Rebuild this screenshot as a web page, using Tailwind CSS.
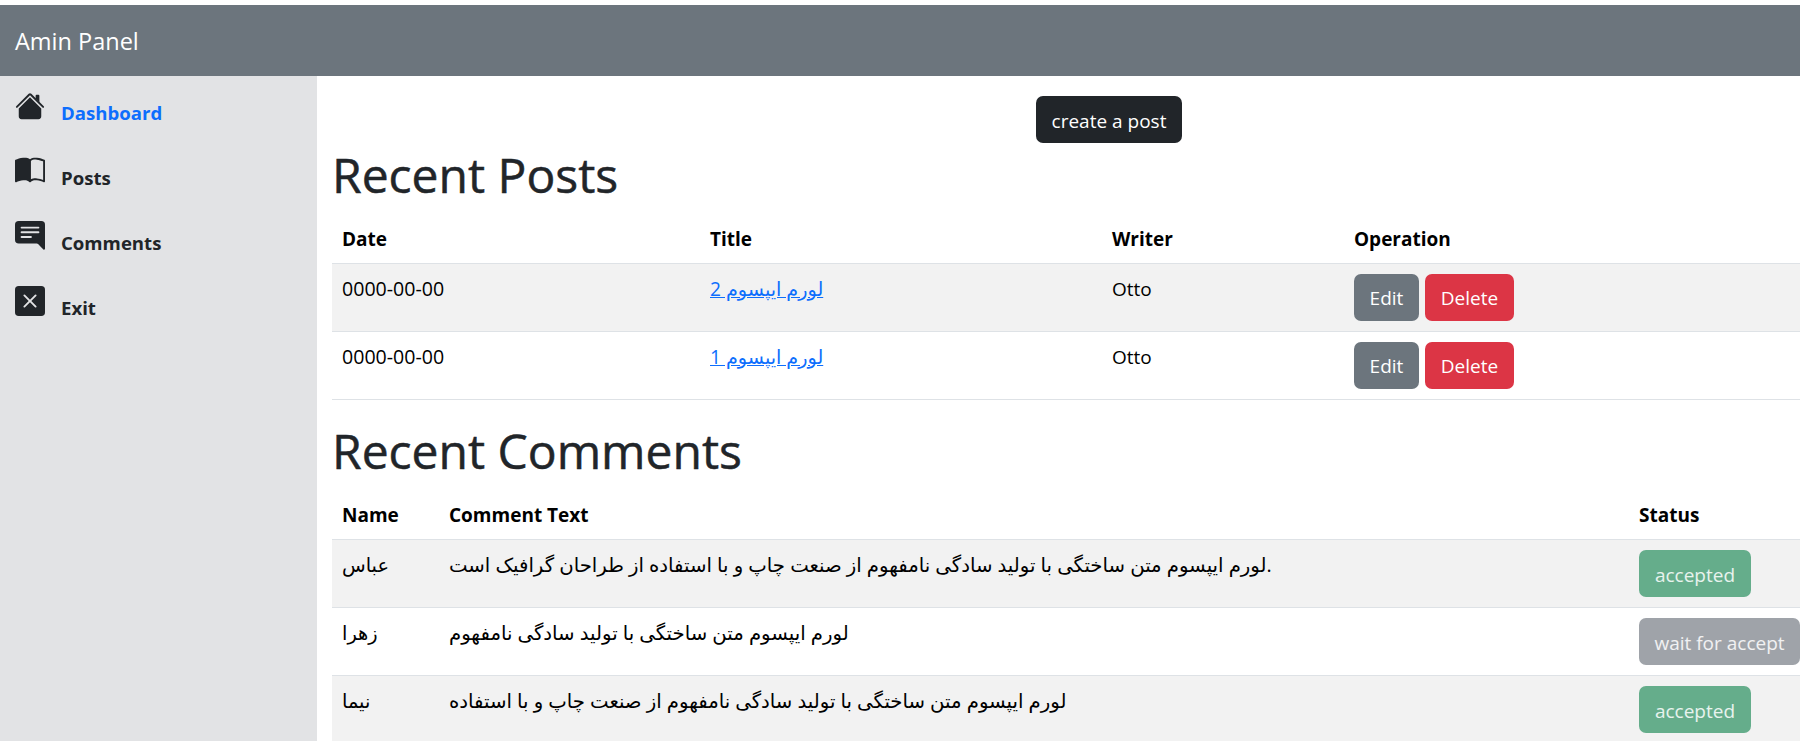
<!DOCTYPE html>
<html>
  <head>
    <title>Amin Panel</title>
    <script src="https://cdn.jsdelivr.net/npm/@tailwindcss/browser@4"></script>
  </head>
  <body class="bg-white h-screen overflow-hidden pt-[5px] text-[19px] leading-[30px] text-[#212529] font-['Open_Sans','DejaVu_Sans',sans-serif]">
    <header class="bg-[#6c757d] h-[71px] flex items-center px-[15px] text-[23.5px] text-white">Amin Panel</header>

    <div class="flex h-[665px]">
      <aside class="w-[317px] shrink-0 bg-[#e2e3e5] pt-[18px] pl-[15px] text-[18.6px]">
        <a class="flex items-start gap-[16px] h-[65px] font-bold text-[#0d6efd]" href="#">
          <svg class="mt-[-3px] text-[#212529]" width="30" height="30" viewBox="0 0 16 16" fill="currentColor">
            <path fill-rule="evenodd" d="m8 3.293 6 6V13.5a1.5 1.5 0 0 1-1.5 1.5h-9A1.5 1.5 0 0 1 2 13.5V9.293l6-6zm5-.793V6l-2-2V2.5a.5.5 0 0 1 .5-.5h1a.5.5 0 0 1 .5.5z"/>
            <path fill-rule="evenodd" d="M7.293 1.5a1 1 0 0 1 1.414 0l6.647 6.646a.5.5 0 0 1-.708.708L8 2.207 1.354 8.854a.5.5 0 1 1-.708-.708L7.293 1.5z"/>
          </svg>
          <span class="mt-[4px]">Dashboard</span>
        </a>
        <a class="flex items-start gap-[16px] h-[65px] font-bold" href="#">
          <svg class="mt-[-3px]" width="30" height="30" viewBox="0 0 16 16" fill="currentColor">
            <path fill-rule="evenodd" d="M8.5 2.687c.654-.689 1.782-.886 3.112-.752 1.234.124 2.503.523 3.388.893v9.923c-.918-.35-2.107-.692-3.287-.81-1.094-.111-2.278-.039-3.213.492V2.687zM8 1.783C7.015.936 5.587.81 4.287.94c-1.514.153-3.042.672-3.994 1.105A.5.5 0 0 0 0 2.5v11a.5.5 0 0 0 .707.455c.882-.4 2.303-.881 3.68-1.02 1.409-.142 2.59.087 3.223.877a.5.5 0 0 0 .78 0c.633-.79 1.814-1.019 3.222-.877 1.378.139 2.8.62 3.681 1.02A.5.5 0 0 0 16 13.5v-11a.5.5 0 0 0-.293-.455c-.952-.433-2.48-.952-3.994-1.105C10.413.809 8.985.936 8 1.783z"/>
          </svg>
          <span class="mt-[4px]">Posts</span>
        </a>
        <a class="flex items-start gap-[16px] h-[65px] font-bold" href="#">
          <svg class="mt-[-3px]" width="30" height="30" viewBox="0 0 16 16" fill="currentColor">
            <path d="M16 2a2 2 0 0 0-2-2H2a2 2 0 0 0-2 2v8a2 2 0 0 0 2 2h9.586a1 1 0 0 1 .707.293l2.853 2.853a.5.5 0 0 0 .854-.353V2zM3.5 3h9a.5.5 0 0 1 0 1h-9a.5.5 0 0 1 0-1zm0 2.5h9a.5.5 0 0 1 0 1h-9a.5.5 0 0 1 0-1zm0 2.5h5a.5.5 0 0 1 0 1h-5a.5.5 0 0 1 0-1z"/>
          </svg>
          <span class="mt-[4px]">Comments</span>
        </a>
        <a class="flex items-start gap-[16px] h-[65px] font-bold" href="#">
          <svg class="mt-[-3px]" width="30" height="30" viewBox="0 0 16 16" fill="currentColor">
            <path d="M2 0a2 2 0 0 0-2 2v12a2 2 0 0 0 2 2h12a2 2 0 0 0 2-2V2a2 2 0 0 0-2-2H2zm3.354 4.646L8 7.293l2.646-2.647a.5.5 0 0 1 .708.708L8.707 8l2.647 2.646a.5.5 0 0 1-.708.708L8 8.707l-2.646 2.647a.5.5 0 0 1-.708-.708L7.293 8 4.646 5.354a.5.5 0 1 1 .708-.708z"/>
          </svg>
          <span class="mt-[4px]">Exit</span>
        </a>
      </aside>

      <main class="flex-1 min-w-0 pl-[15px] pt-[20px]">
        <div class="flex justify-center pl-[86px]">
          <a class="bg-[#212529] text-white rounded-[7px] h-[47px] pt-[2px] px-[16px] flex items-center" href="#">create a post</a>
        </div>

        <h1 class="text-[48px] [-webkit-text-stroke:0.5px] leading-[60px] mt-[2px] mb-[8px]">Recent Posts</h1>
        <table class="w-[1468px] table-fixed text-black">
          <thead>
            <tr class="h-[50px] border-b border-[#dee2e6] text-left font-bold">
              <th class="w-[368px] px-[10px] pt-[2px]">Date</th>
              <th class="w-[402px] px-[10px] pt-[2px]">Title</th>
              <th class="w-[242px] px-[10px] pt-[2px]">Writer</th>
              <th class="px-[10px] pt-[2px]">Operation</th>
            </tr>
          </thead>
          <tbody>
            <tr class="h-[68px] border-b border-[#dee2e6] bg-[#f2f2f2]">
              <td class="align-top p-[10px] text-[19.6px]">0000-00-00</td>
              <td class="align-top p-[10px]"><a class="text-[#0d6efd] underline text-[19.2px]" href="#">لورم ایپسوم 2</a></td>
              <td class="align-top p-[10px]">Otto</td>
              <td class="align-top p-[10px]">
                <div class="flex gap-[6px]">
                  <a class="bg-[#6c757d] text-white rounded-[7px] h-[47px] pt-[2px] w-[65px] flex items-center justify-center" href="#">Edit</a>
                  <a class="bg-[#dc3545] text-white rounded-[7px] h-[47px] pt-[2px] w-[89px] flex items-center justify-center" href="#">Delete</a>
                </div>
              </td>
            </tr>
            <tr class="h-[68px] border-b border-[#dee2e6]">
              <td class="align-top p-[10px] text-[19.6px]">0000-00-00</td>
              <td class="align-top p-[10px]"><a class="text-[#0d6efd] underline text-[19.2px]" href="#">لورم ایپسوم 1</a></td>
              <td class="align-top p-[10px]">Otto</td>
              <td class="align-top p-[10px]">
                <div class="flex gap-[6px]">
                  <a class="bg-[#6c757d] text-white rounded-[7px] h-[47px] pt-[2px] w-[65px] flex items-center justify-center" href="#">Edit</a>
                  <a class="bg-[#dc3545] text-white rounded-[7px] h-[47px] pt-[2px] w-[89px] flex items-center justify-center" href="#">Delete</a>
                </div>
              </td>
            </tr>
          </tbody>
        </table>

        <h1 class="text-[48px] [-webkit-text-stroke:0.5px] leading-[60px] mt-[21px] mb-[9px]">Recent Comments</h1>
        <table class="w-[1468px] table-fixed text-black">
          <thead>
            <tr class="h-[50px] border-b border-[#dee2e6] text-left font-bold">
              <th class="w-[107px] px-[10px] pt-[2px]">Name</th>
              <th class="w-[1190px] px-[10px] pt-[2px]">Comment Text</th>
              <th class="px-[10px] pt-[2px]">Status</th>
            </tr>
          </thead>
          <tbody>
            <tr class="h-[68px] border-b border-[#dee2e6] bg-[#f2f2f2]">
              <td class="align-top p-[10px] text-[19.4px]">عباس</td>
              <td class="align-top p-[10px] text-[19.7px]">لورم ایپسوم متن ساختگی با تولید سادگی نامفهوم از صنعت چاپ و با استفاده از طراحان گرافیک است.</td>
              <td class="align-top p-[10px]"><span class="bg-[#65ad8b] text-white/85 rounded-[7px] h-[47px] pt-[2px] w-[112px] flex items-center justify-center">accepted</span></td>
            </tr>
            <tr class="h-[68px] border-b border-[#dee2e6]">
              <td class="align-top p-[10px] text-[19.4px]">زهرا</td>
              <td class="align-top p-[10px] text-[19.7px]">لورم ایپسوم متن ساختگی با تولید سادگی نامفهوم</td>
              <td class="align-top p-[10px]"><span class="bg-[#9fa3a9] text-white/85 rounded-[7px] h-[47px] pt-[2px] w-[161px] flex items-center justify-center">wait for accept</span></td>
            </tr>
            <tr class="h-[68px] border-b border-[#dee2e6] bg-[#f2f2f2]">
              <td class="align-top p-[10px] text-[19.4px]">نیما</td>
              <td class="align-top p-[10px] text-[19.7px]">لورم ایپسوم متن ساختگی با تولید سادگی نامفهوم از صنعت چاپ و با استفاده</td>
              <td class="align-top p-[10px]"><span class="bg-[#65ad8b] text-white/85 rounded-[7px] h-[47px] pt-[2px] w-[112px] flex items-center justify-center">accepted</span></td>
            </tr>
          </tbody>
        </table>
      </main>
    </div>
  </body>
</html>
